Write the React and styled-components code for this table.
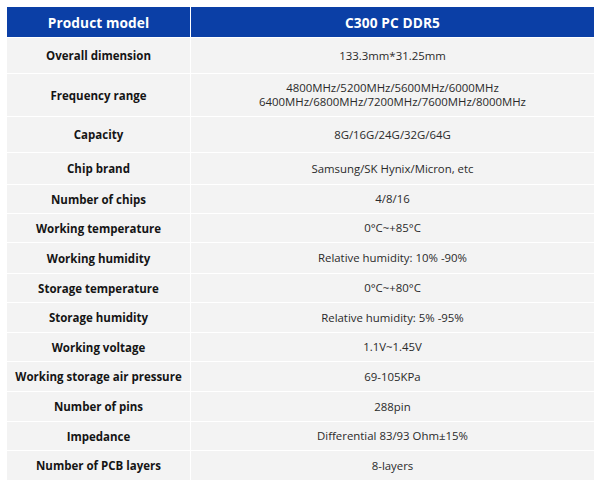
import React from "react";
import styled, { createGlobalStyle } from "styled-components";

const Global = createGlobalStyle`
  html, body { margin: 0; padding: 0; background: #ffffff; }
  body { font-family: "Open Sans", "Noto Sans", sans-serif; }
`;

const Page = styled.div`
  width: 600px;
  height: 497px;
  padding: 7px 7px 0 7px;
  box-sizing: border-box;
  background: #ffffff;
`;

const Table = styled.div`
  display: grid;
  grid-template-columns: 183px 403px;
  width: 586px;
  background: #ffffff;
  gap: 1px;
`;

const HeadCell = styled.div`
  background: #0b3fa6;
  color: #ffffff;
  font-weight: 700;
  font-size: 13.7px;
  height: 30px;
  display: flex;
  align-items: center;
  justify-content: center;
  letter-spacing: 0.1px;
`;

const Label = styled.div`
  background: #f3f3f3;
  color: #151515;
  font-weight: 700;
  font-size: 11.5px;
  height: ${(p) => p.$h}px;
  display: flex;
  align-items: center;
  justify-content: center;
  text-align: center;
`;

const Value = styled.div`
  background: #f3f3f3;
  color: #2a2a2a;
  font-size: 11.4px;
  line-height: 14px;
  height: ${(p) => p.$h}px;
  display: flex;
  flex-direction: column;
  align-items: center;
  justify-content: center;
  text-align: center;
`;

const rows = [
  ["Overall dimension", ["133.3mm*31.25mm"], 35],
  [
    "Frequency range",
    ["4800MHz/5200MHz/5600MHz/6000MHz", "6400MHz/6800MHz/7200MHz/7600MHz/8000MHz"],
    42,
  ],
  ["Capacity", ["8G/16G/24G/32G/64G"], 35],
  ["Chip brand", ["Samsung/SK Hynix/Micron, etc"], 31],
  ["Number of chips", ["4/8/16"], 28],
  ["Working temperature", ["0°C~+85°C"], 28],
  ["Working humidity", ["Relative humidity: 10% -90%"], 30],
  ["Storage temperature", ["0°C~+80°C"], 28],
  ["Storage humidity", ["Relative humidity: 5% -95%"], 29],
  ["Working voltage", ["1.1V~1.45V"], 28],
  ["Working storage air pressure", ["69-105KPa"], 29],
  ["Number of pins", ["288pin"], 29],
  ["Impedance", ["Differential 83/93 Ohm±15%"], 28],
  ["Number of PCB layers", ["8-layers"], 29],
];

export default function App() {
  return (
    <>
      <Global />
      <Page>
        <Table>
          <HeadCell>Product model</HeadCell>
          <HeadCell>C300 PC DDR5</HeadCell>
          {rows.map(([label, vals, h]) => (
            <React.Fragment key={label}>
              <Label $h={h}>{label}</Label>
              <Value $h={h}>
                {vals.map((v) => (
                  <span key={v}>{v}</span>
                ))}
              </Value>
            </React.Fragment>
          ))}
        </Table>
      </Page>
    </>
  );
}
